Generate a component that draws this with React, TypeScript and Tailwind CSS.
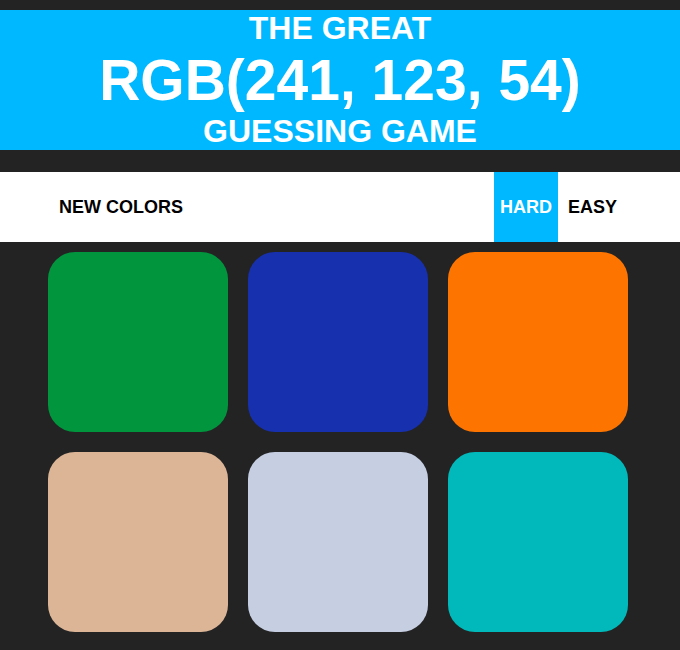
import React from "react";

const squares = ["#01953e", "#1730ad", "#fd7400", "#dcb597", "#c6cee2", "#01b9ba"];

export default function App() {
  return (
    <div className="min-h-[650px] bg-[#232323] pt-[10px] font-['Liberation_Sans',Arial,sans-serif] font-bold">
      {/* header */}
      <div className="flex h-[140px] flex-col items-center bg-[#00b8ff] text-white">
        <div className="h-[37px] text-[32px] leading-[37px]">THE GREAT</div>
        <div className="h-[66px] text-[57px] leading-[66px]">RGB(241, 123, 54)</div>
        <div className="h-[36px] text-[32px] leading-[36px]">GUESSING GAME</div>
      </div>

      {/* controls */}
      <div className="mt-[22px] flex h-[70px] items-stretch bg-white text-[18px] text-black">
        <button className="ml-[59px] flex items-center font-bold">NEW COLORS</button>
        <div className="flex-1" />
        <button className="flex w-[64px] items-center justify-center bg-[#00b8ff] font-bold text-white">
          HARD
        </button>
        <button className="mr-[63px] ml-[10px] flex items-center font-bold">EASY</button>
      </div>

      {/* squares */}
      <div className="grid grid-cols-[180px_180px_180px] gap-5 pt-[10px] pl-[48px]">
        {squares.map((c, i) => (
          <div key={i} className="h-[180px] w-[180px] rounded-[27px]" style={{ backgroundColor: c }} />
        ))}
      </div>
    </div>
  );
}
